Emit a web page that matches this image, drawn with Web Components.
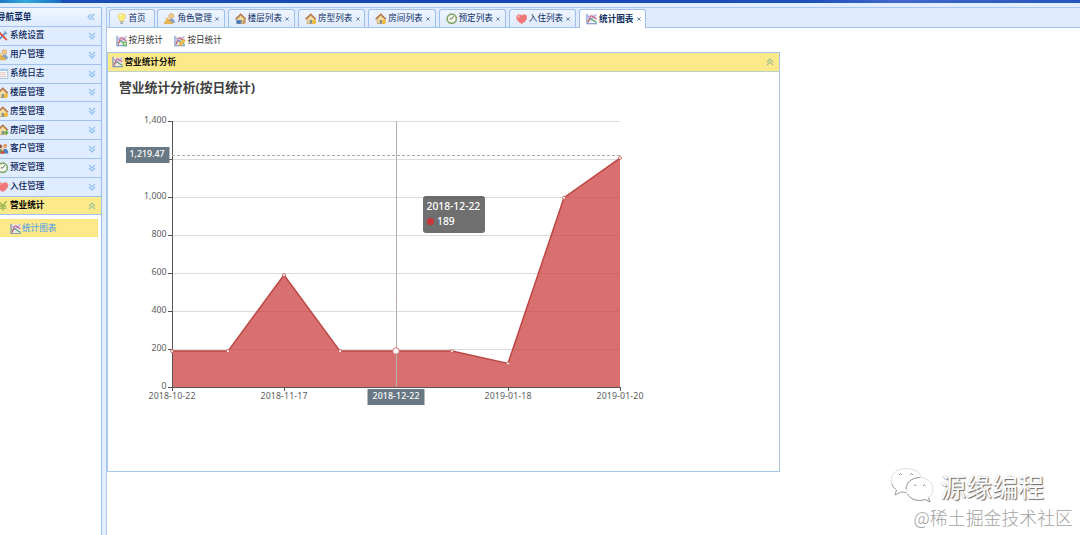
<!DOCTYPE html>
<html>
<head>
<meta charset="utf-8">
<title>统计图表</title>
<style>
    html, body {
        margin: 0;
        height: 100%;
        overflow: hidden;
    }
    body {
        font: 8.6px/12px "Liberation Sans", "Noto Sans CJK SC", sans-serif;
        color: #0e2d5f;
    }
</style>
</head>
<body>
<hotel-app>
    <side-nav slot="nav" heading="导航菜单">
        <nav-row icon="tools" text="系统设置"></nav-row>
        <nav-row icon="user" text="用户管理"></nav-row>
        <nav-row icon="log" text="系统日志"></nav-row>
        <nav-row icon="house" text="楼层管理"></nav-row>
        <nav-row icon="house" text="房型管理"></nav-row>
        <nav-row icon="housego" text="房间管理"></nav-row>
        <nav-row icon="group" text="客户管理"></nav-row>
        <nav-row icon="clock" text="预定管理"></nav-row>
        <nav-row icon="heart" text="入住管理"></nav-row>
        <nav-row icon="yen" text="营业统计" open></nav-row>
        <nav-item icon="chart" text="统计图表"></nav-item>
    </side-nav>
    <tab-item slot="tabs" icon="bulb" text="首页" style="width:46px" fixed></tab-item>
    <tab-item slot="tabs" icon="user" text="角色管理"></tab-item>
    <tab-item slot="tabs" icon="houseblue" text="楼层列表"></tab-item>
    <tab-item slot="tabs" icon="house" text="房型列表"></tab-item>
    <tab-item slot="tabs" icon="house" text="房间列表"></tab-item>
    <tab-item slot="tabs" icon="clock" text="预定列表"></tab-item>
    <tab-item slot="tabs" icon="heart" text="入住列表"></tab-item>
    <tab-item slot="tabs" icon="chart" text="统计图表" active></tab-item>
    <tool-button slot="tools" icon="chartadd" text="按月统计"></tool-button>
    <tool-button slot="tools" icon="chartedit" text="按日统计"></tool-button>
    <chart-panel icon="chart" heading="营业统计分析">
        <area-chart heading="营业统计分析(按日统计)"></area-chart>
    </chart-panel>
</hotel-app>
<water-mark></water-mark>

<script>
const HOUSE = '<path d="M2.3 6v5h7.5V6L6 2.6z" fill="#f8dfa0" stroke="#b58c45" stroke-width=".6"/><path d="M.6 6.6 6 1.4l5.4 5.2" fill="none" stroke="#b57442" stroke-width="1.5"/><path d="M4.8 7.2h2.5V11H4.8z" fill="#84909a"/>';
const CHART = '<path d="M2 1.5h9V10H2z" fill="#e4e6f6"/><path d="M1 .8v10.4h10.5" fill="none" stroke="#6a86c4" stroke-width="1.1"/><path d="M2 8.5 4.5 6l3 1.5L11 10" fill="none" stroke="#62aa66" stroke-width="1.3"/><path d="M2.2 10 4 4.500q2-3 4 0L11 6" fill="none" stroke="#d9606e" stroke-width="1.2"/><path d="M2.2 3 5 6.500 10.8 1.5" fill="none" stroke="#9387cf" stroke-width="1"/>';

// every icon is drawn on a 12x12 grid
const ICONS = {
    house: HOUSE + '<circle cx="9.4" cy="9.2" r="2.2" fill="#f4ba35"/>',
    houseblue: HOUSE + '<path d="M1.5 7.5h4v3.7h-4z" fill="#4377b6"/><path d="M8 7h3v4H8z" fill="#c8965c"/>',
    housego: HOUSE + '<path d="M7 8h2.3V6.3L12 9l-2.7 2.7V10H7z" fill="#55a941"/>',
    chart: CHART,
    chartadd: CHART + '<circle cx="9.3" cy="9.2" r="2.5" fill="#58a748"/><path d="M9.3 7.7v3M7.8 9.2h3" stroke="#fff" stroke-width=".9"/>',
    chartedit: CHART + '<path d="m5 11.5.6-2.8L10 4l2 2-4.300 4.800z" fill="#f3bd4c" stroke="#cf9140" stroke-width=".4"/>',
    bulb: '<path d="M6 .5c5 0 4.6 4.800 2 6.700L7.8 9H4.2L4 7.200C1.4 5.300 1 .5 6 .5z" fill="#faea78" stroke="#dac55c" stroke-width=".5"/><path d="M4.3 9.2h3.4M4.6 10.8h2.8" stroke="#9aa3a8" stroke-width="1.1"/><path d="M4 3.5Q4.3 2 6 2" stroke="#fff" fill="none"/>',
    user: '<circle cx="7.6" cy="3.2" r="2.5" fill="#f4cd8c" stroke="#c48b3a" stroke-width=".6"/><path d="M4 10.7c0-6.4 7.5-6.3 7.5-.5z" fill="#7da3cc"/><circle cx="3.6" cy="6.5" r="1.9" fill="#f0c163"/><path d="M.3 11.3c0-4.600 7.500-4.600 9 0z" fill="#ecb447" stroke="#c99339" stroke-width=".5"/>',
    group: '<circle cx="3.3" cy="3.5" r="2" fill="#91522f"/><circle cx="8.5" cy="3" r="2.1" fill="#e0a06b"/><path d="M.5 10.8c0-6.4 5.8-6 5.8 0z" fill="#5b9951"/><path d="M5.4 11c0-7 6.4-6.5 6.4 0z" fill="#4c80bb"/><circle cx="5.8" cy="6.4" r="1.5" fill="#f0c091"/><path d="M3.4 11.3c0-4.3 4.8-4.3 4.8 0z" fill="#d15347"/>',
    clock: '<circle cx="6" cy="6" r="4.8" fill="#f7fbf2" stroke="#84a66b" stroke-width="1.7"/><path d="M8 3.3 6 6.2H3.9" stroke="#54653f" fill="none" stroke-width="1"/>',
    heart: '<path d="M6 11.3C-4 5.800 1.700-1.200 6 2.500c4.300-3.700 10 3.300 0 8.800z" fill="#f07678" stroke="#eda0a0" stroke-width=".6"/><path d="M2 5q.2-2 2.2-2" stroke="#fcc8c2" fill="none" stroke-width="1.2"/>',
    tools: '<path d="m1.5 10.5 8-8" stroke="#5b8cc6" stroke-width="1.8"/><path d="m2 2.2 8.3 8.3" stroke="#e05642" stroke-width="2"/><path d="M8.3.8 8 3.4l2.9.3" fill="none" stroke="#85a2c2" stroke-width="1.2"/>',
    log: '<path d="M.8 1.3h10.4v9.5H.8z" fill="#fff" stroke="#8eb4da" stroke-width=".8"/><path d="M1 1.3h10v1.9H1z" fill="#a8c9eb"/><path d="M2.3 5h7.4M2.3 7h7.4M2.3 9h7.4" stroke="#d4b0ad" stroke-width=".8"/>',
    yen: '<path d="m2 1.3 4 4.6 4-4.6M6 5.9v5M2.3 6.2h7.4M2.3 8.5h7.4" stroke="#9ab654" fill="none" stroke-width="1.5"/>'
};

class UiIcon extends HTMLElement {
    constructor() {
        super();
        this.attachShadow({mode: 'open'});
    }
    connectedCallback() {
        this.shadowRoot.innerHTML = `
        <style>
        :host { display: block; flex: none; width: 11.5px; height: 11.5px; }
        svg { display: block; width: 100%; height: 100%; }
        </style>
        <svg viewBox="0 0 12 12">${ICONS[this.getAttribute('name')]}</svg>`;
    }
}
customElements.define('ui-icon', UiIcon);

// double arrow, direction is down, up or left
class FoldArrow extends HTMLElement {
    constructor() {
        super();
        this.attachShadow({mode: 'open'});
    }
    connectedCallback() {
        const turn = {down: 0, left: 90, up: 180}[this.getAttribute('dir')];
        this.shadowRoot.innerHTML = `
        <style>
        :host { display: block; flex: none; width: 8px; height: 8px; color: #8fc0ee; }
        svg { display: block; transform: rotate(${turn}deg); }
        </style>
        <svg width="8" height="8" viewBox="0 0 8 8" fill="none" stroke="currentColor" stroke-width="1.2"><path d="m1 .8 3 3 3-3M1 4l3 3 3-3"/></svg>`;
    }
}
customElements.define('fold-arrow', FoldArrow);

class SideNav extends HTMLElement {
    constructor() {
        super();
        this.attachShadow({mode: 'open'});
        this.shadowRoot.innerHTML = `
        <style>
        :host {
            display: flex;
            flex-direction: column;
            box-sizing: border-box;
            width: 102px;
            background: #fff;
            border: 1px solid #9dbfee;
            border-width: 1px 1px 0 0;
        }
        header {
            display: flex;
            align-items: center;
            justify-content: space-between;
            box-sizing: border-box;
            height: 19px;
            padding-right: 6px;
            background: linear-gradient(#f0f6ff, #dfebff);
            border-bottom: 1px solid #a1c1ee;
            font-weight: bold;
        }
        span { margin: -1px 0 0 -3px; }
        </style>
        <header><span></span><fold-arrow dir="left"></fold-arrow></header>
        <slot></slot>`;
    }
    connectedCallback() {
        this.shadowRoot.querySelector('span').textContent = this.getAttribute('heading');
    }
}
customElements.define('side-nav', SideNav);

class NavRow extends HTMLElement {
    constructor() {
        super();
        this.attachShadow({mode: 'open'});
    }
    connectedCallback() {
        const open = this.hasAttribute('open');
        this.shadowRoot.innerHTML = `
        <style>
        :host {
            display: flex;
            align-items: center;
            box-sizing: border-box;
            height: 18.85px;
            padding-right: 5px;
            background: #e0ecff;
            border-bottom: 1px solid #a1c1ee;
            font-weight: 500;
            color: #0b2558;
        }
        :host([open]) { background: #fbe98a; font-weight: bold; color: #000; }
        :host([open]) fold-arrow { color: #a3bf9c; }
        ui-icon { margin-left: -3px; }
        span { flex: 1; margin: -1px 0 0 1.5px; }
        </style>
        <ui-icon name="${this.getAttribute('icon')}"></ui-icon>
        <span>${this.getAttribute('text')}</span>
        <fold-arrow dir="${open ? 'up' : 'down'}"></fold-arrow>`;
    }
}
customElements.define('nav-row', NavRow);

class NavItem extends HTMLElement {
    constructor() {
        super();
        this.attachShadow({mode: 'open'});
    }
    connectedCallback() {
        this.shadowRoot.innerHTML = `
        <style>
        :host {
            display: flex;
            align-items: center;
            gap: 1px;
            box-sizing: border-box;
            height: 18px;
            margin: 4px 3px 0 0;
            padding-left: 9.5px;
            background: #fbe98a;
            border: 1px solid #fce47b;
            border-left: 0;
            color: #4a9bec;
        }
        </style>
        <ui-icon name="${this.getAttribute('icon')}"></ui-icon>
        <span>${this.getAttribute('text')}</span>`;
    }
}
customElements.define('nav-item', NavItem);

class TabItem extends HTMLElement {
    constructor() {
        super();
        this.attachShadow({mode: 'open'});
    }
    connectedCallback() {
        this.shadowRoot.innerHTML = `
        <style>
        :host {
            display: flex;
            align-items: center;
            box-sizing: border-box;
            width: 67.4px;
            height: 18px;
            padding-left: 6px;
            border: 1px solid #9fc0ec;
            border-bottom: 0;
            border-radius: 3px 3px 0 0;
            background: linear-gradient(#eff5ff, #dfebff);
        }
        :host([active]) {
            height: 19px;
            margin-bottom: -1px;
            background: #fff;
            font-weight: bold;
        }
        span { margin: -1px 0 0 1.5px; white-space: nowrap; }
        svg { margin: 0 0 0 3.2px; }
        </style>
        <ui-icon name="${this.getAttribute('icon')}"></ui-icon>
        <span>${this.getAttribute('text')}</span>
        ${this.hasAttribute('fixed') ? '' : '<svg width="4" height="4" viewBox="0 0 4 4"><path d="m.3.3 3.4 3.4m0-3.4L.3 3.7" stroke="#607898" stroke-width=".9"/></svg>'}`;
    }
}
customElements.define('tab-item', TabItem);

class ToolButton extends HTMLElement {
    constructor() {
        super();
        this.attachShadow({mode: 'open'});
    }
    connectedCallback() {
        this.shadowRoot.innerHTML = `
        <style>
        :host { display: flex; align-items: center; gap: 1.5px; color: #333; }
        ui-icon { margin-top: 2px; }
        </style>
        <ui-icon name="${this.getAttribute('icon')}"></ui-icon>
        <span>${this.getAttribute('text')}</span>`;
    }
}
customElements.define('tool-button', ToolButton);

class ChartPanel extends HTMLElement {
    constructor() {
        super();
        this.attachShadow({mode: 'open'});
    }
    connectedCallback() {
        this.shadowRoot.innerHTML = `
        <style>
        :host {
            display: block;
            box-sizing: border-box;
            width: 673px;
            height: 420px;
            border: 1px solid #a9c5e8;
        }
        header {
            display: flex;
            align-items: center;
            box-sizing: border-box;
            height: 19px;
            padding: 0 5px 0 4px;
            background: #fbe98a;
            border-bottom: 1px solid #bdd0c2;
            font-weight: bold;
            color: #111;
        }
        span { flex: 1; margin-left: 1px; }
        fold-arrow { color: #9fbd91; }
        </style>
        <header>
            <ui-icon name="${this.getAttribute('icon')}"></ui-icon>
            <span>${this.getAttribute('heading')}</span>
            <fold-arrow dir="up"></fold-arrow>
        </header>
        <slot></slot>`;
    }
}
customElements.define('chart-panel', ChartPanel);

class AreaChart extends HTMLElement {
    constructor() {
        super();
        this.attachShadow({mode: 'open'});
        this._values = [189, 189, 589, 189, 189, 189, 124, 996, 1205];
        this._labels = {0: '2018-10-22', 2: '2018-11-17', 6: '2019-01-18', 8: '2019-01-20'};
        this._current = 4;
    }

    _x(i) {
        return 64 + i * 56;
    }
    _y(value) {
        return 315 - value * 0.19;
    }

    connectedCallback() {
        const points = this._values.map((v, i) => [this._x(i), this._y(v)]);
        const line = points.map(p => p.join(',')).join(' ');
        let grid = '', axis = '', dots = '';
        for (let v = 0; v <= 1400; v += 200) {
            const y = Math.round(this._y(v)) + 0.5;
            if (v) {
                grid += `<path d="M64 ${y}H512" stroke="#dcdcdc"/>`;
            }
            axis += `<path d="M60 ${y}H64" stroke="#555"/>`;
            // 1,200 is under the pointer label
            if (v !== 1200) {
                axis += `<text x="58.5" y="${y + 1.5}" text-anchor="end">${v.toLocaleString('en-US')}</text>`;
            }
        }
        for (const i in this._labels) {
            axis += `<path d="M${this._x(i) + 0.5} 315v4" stroke="#555"/><text x="${this._x(i)}" y="327" text-anchor="middle" textLength="47">${this._labels[i]}</text>`;
        }
        points.forEach((p, i) => {
            const r = i === this._current ? 3.3 : 1.5;
            dots += `<circle cx="${p[0]}" cy="${p[1]}" r="${r}" fill="#fff" stroke="#cb5350" stroke-width=".8"/>`;
        });

        this.shadowRoot.innerHTML = `
        <style>
        :host { display: block; position: relative; }
        svg { display: block; }
        text { font: 8.8px "Noto Sans", sans-serif; fill: #5c5c5c; }
        .title { font: bold 12.8px "Noto Sans", "Noto Sans CJK SC", sans-serif; fill: #404040; }
        .pointer { fill: #fff; font-weight: 500; }
        .tip {
            position: absolute;
            left: 315px;
            top: 124px;
            box-sizing: border-box;
            width: 62px;
            height: 37px;
            padding: 3px 3.5px 0 3.5px;
            border-radius: 3px;
            background: rgba(50, 50, 50, .7);
            color: #fff;
            font: 500 10.3px/15px "Noto Sans", sans-serif;
            white-space: nowrap;
        }
        i {
            display: inline-block;
            width: 7px;
            height: 7px;
            margin-right: 3.5px;
            border-radius: 50%;
            background: #c9353a;
        }
        </style>
        <svg width="671" height="398" viewBox="0 0 671 398">
            <text class="title" x="11" y="20" textLength="136">${this.getAttribute('heading')}</text>
            ${grid}
            <polygon points="${line} 512,315 64,315" fill="#c83b38" fill-opacity=".73"/>
            <polyline points="${line}" fill="none" stroke="#bd4644" stroke-width="1.5"/>
            <path d="M64.5 49V315.5M64 315.5H512.5" fill="none" stroke="#555"/>
            ${axis}
            <path d="M64 83.5H512" stroke="#aaa" stroke-dasharray="3 2"/>
            <path d="M288.5 49V315" stroke="#b2b2b2"/>
            ${dots}
            <path d="M288.5 226v6" stroke="#c9a8a6" stroke-width=".8"/>
            <path d="M18 75h43.5v16H18zM259.5 317h57v16h-57z" fill="#687884"/>
            <text class="pointer" x="56.5" y="85" text-anchor="end">1,219.47</text>
            <text class="pointer" x="288" y="327" text-anchor="middle" textLength="47">2018-12-22</text>
        </svg>
        <div class="tip">2018-12-22<br><i></i>189</div>`;
    }
}
customElements.define('area-chart', AreaChart);

class HotelApp extends HTMLElement {
    constructor() {
        super();
        this.attachShadow({mode: 'open'});
        this.shadowRoot.innerHTML = `
        <style>
        :host { display: flex; flex-direction: column; height: 100vh; background: #e3eeff; }
        .banner {
            flex: none;
            height: 3px;
            background: linear-gradient(90deg, #1b78c8 0, #36aadb 25px, #1670c4 60px, #1a4fb8 62px, #1645b5 45%, #1e50bd 75%, #4267ca 83%, #2456bd 100%);
        }
        .body { flex: 1; display: flex; gap: 4px; padding-top: 4px; min-height: 0; }
        main {
            flex: 1;
            display: flex;
            flex-direction: column;
            border: 1px solid #a9c7ef;
            border-width: 1px 0 0 1px;
            background: #fff;
        }
        .tabs {
            display: flex;
            align-items: flex-end;
            gap: 2.9px;
            box-sizing: border-box;
            height: 20px;
            padding-left: 1.5px;
            background: #e0ebfd;
            border-bottom: 1px solid #a1c1ee;
        }
        .tools { display: flex; gap: 11.5px; height: 24px; padding-left: 8.5px; }
        </style>
        <div class="banner"></div>
        <div class="body">
            <slot name="nav"></slot>
            <main>
                <div class="tabs"><slot name="tabs"></slot></div>
                <div class="tools"><slot name="tools"></slot></div>
                <slot></slot>
            </main>
        </div>`;
    }
}
customElements.define('hotel-app', HotelApp);

// signature laid over the bottom right corner
class WaterMark extends HTMLElement {
    constructor() {
        super();
        this.attachShadow({mode: 'open'});
        this.shadowRoot.innerHTML = `
        <style>
        :host { position: absolute; right: 7px; bottom: 6px; color: #fff; }
        div { display: flex; align-items: center; justify-content: flex-end; }
        .name {
            gap: 6px;
            margin: 0 29px 1px 0;
            font: 26px/36px "Noto Sans CJK SC", sans-serif;
            text-shadow: 1px 1px 1px #666, 0 0 1px #bbb;
        }
        svg { margin-top: -3px; }
        .site {
            font: 300 17.9px/24px "Noto Sans CJK SC", sans-serif;
            color: #a3a3a3;
        }
        </style>
        <div class="name">
            <svg width="44" height="36" viewBox="0 0 44 36" fill="#fff" stroke="#d4d4d4" stroke-width=".8">
                <path d="M16 1.5C7 1.5 1 7 1 13.5c0 4 2 7 5.500 9.500L5 28l6-3c13 3 21-3 21-11S25 1.5 16 1.5z"/>
                <path d="M2 17q1 4 4.500 6L5 28l6-3 5 .5" fill="none" stroke="#999"/>
                <path d="M29.5 10.5C22 10.500 16 15.500 16 22s6 11.500 13.500 11.500c2 0 4-.3 5.500-1l5 2.500-1.500-4.500c3-2 4.500-5 4.500-8.500 0-6.500-6-11.500-13.500-11.500z"/>
                <path d="M30 10.5C22 10.500 16 15.500 16 22M17.500 27c2 4 7 6.500 12 6.500 2 0 4-.3 5.500-1l5 2.500-1.500-4.500" fill="none" stroke="#888"/>
                <g fill="none" stroke="#777"><path d="M9 8q1.500-3 3 0M20 8q1.500-3 3 0M24 19q1.300-2.500 2.600 0M33 19q1.300-2.500 2.600 0"/></g>
            </svg>
            <span>源缘编程</span>
        </div>
        <div class="site">@稀土掘金技术社区</div>`;
    }
}
customElements.define('water-mark', WaterMark);
</script>
</body>
</html>
